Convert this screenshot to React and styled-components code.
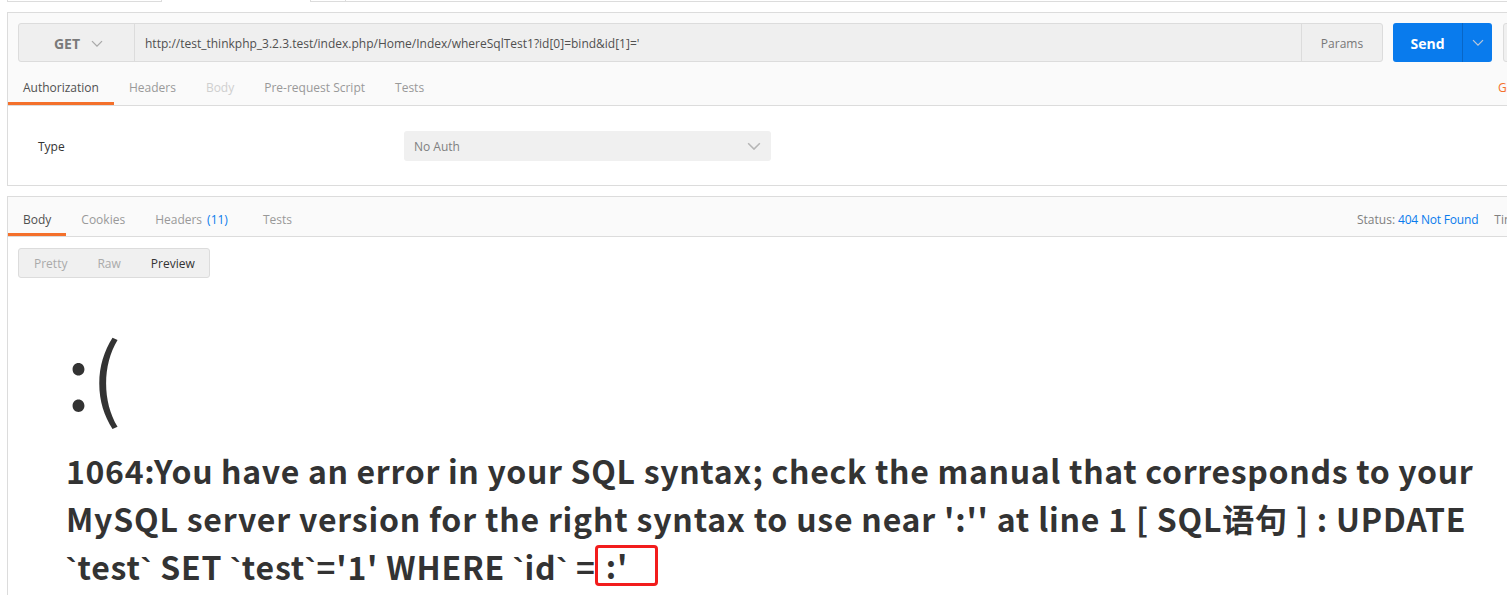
import React from "react";
import styled, { createGlobalStyle } from "styled-components";

const GlobalStyle = createGlobalStyle`
  html, body { margin: 0; padding: 0; background: #fff; overflow: hidden; }
  body { font-family: "Open Sans", "Noto Sans", sans-serif; }
  * { box-sizing: border-box; }
`;

const Root = styled.div`
  width: 1507px;
  height: 595px;
  overflow: hidden;
`;

const TopStrip = styled.div`
  display: flex;
  height: 2px;
`;

const StubTab = styled.div`
  margin-left: ${(p) => p.$ml}px;
  width: ${(p) => p.$w}px;
  height: 2px;
  border: 1px solid #dcdcdc;
  border-top: none;
`;

const StubRest = styled.div`
  flex: 1;
  height: 2px;
  border-bottom: 1px solid #dcdcdc;
`;

const Panel = styled.section`
  margin: 10px 0 0 7px;
  width: 1700px;
  border: 1px solid #dcdcdc;
  background: #fff;
`;

const RequestTop = styled.div`
  background: #fafafa;
  border-bottom: 1px solid #dcdcdc;
`;

const UrlRow = styled.div`
  display: flex;
  padding: 10px 10px 0;
`;

const UrlBar = styled.div`
  display: flex;
  width: 1365px;
  height: 39px;
  border: 1px solid #dcdcdc;
  border-radius: 3px;
  background: #efefef;
`;

const Method = styled.div`
  width: 116px;
  flex: none;
  display: flex;
  align-items: center;
  justify-content: center;
  gap: 11px;
  padding: 2px 0 0 4px;
  border-right: 1px solid #dcdcdc;
  font-size: 14px;
  font-weight: 700;
  color: #7a7a7a;
`;

const UrlText = styled.div`
  flex: 1;
  display: flex;
  align-items: center;
  padding: 2px 0 0 10px;
  font-size: 12px;
  color: #505050;
  white-space: nowrap;
`;

const Params = styled.div`
  width: 81px;
  flex: none;
  display: flex;
  align-items: center;
  justify-content: center;
  padding-top: 2px;
  border-left: 1px solid #dcdcdc;
  font-size: 12px;
  color: #777;
`;

const SendGroup = styled.div`
  display: flex;
  margin-left: 10px;
  width: 99px;
  height: 39px;
  border-radius: 3px;
  background: #097bed;
  overflow: hidden;
`;

const SendMain = styled.div`
  width: 69px;
  display: flex;
  align-items: center;
  justify-content: center;
  padding-top: 2px;
  color: #fff;
  font-size: 14px;
  font-weight: 700;
`;

const SendArrow = styled.div`
  flex: 1;
  display: flex;
  align-items: center;
  justify-content: center;
  border-left: 1px solid #0866c6;
`;

const SaveStub = styled.div`
  margin-left: 11px;
  width: 100px;
  height: 39px;
  border: 1px solid #dcdcdc;
  border-radius: 3px;
  background: #f0f0f0;
`;

const TabRow = styled.div`
  display: grid;
  grid-template-columns: ${(p) => p.$first}px auto;
  height: ${(p) => p.$h}px;
`;

const Tabs = styled.div`
  display: flex;
`;

const Tab = styled.div`
  display: flex;
  align-items: center;
  padding: ${(p) => p.$pt}px 15px 0;
  font-size: 12px;
  color: ${(p) => p.$color};
  border-bottom: 3px solid ${(p) => (p.$active ? "#f4702b" : "transparent")};
  white-space: nowrap;
`;

const Count = styled.span`
  color: #097bed;
  margin: 0 5px 0 5px;
`;

const RightInfo = styled.div`
  display: flex;
  align-items: center;
  padding-top: ${(p) => p.$pt}px;
  gap: 16px;
  font-size: 12px;
  white-space: nowrap;
`;

const Muted = styled.span`
  color: ${(p) => p.$color || "#808080"};
`;

const Blue = styled.span`
  color: #097bed;
  margin-left: 3px;
  letter-spacing: -0.2px;
`;

const AuthSection = styled.div`
  display: grid;
  grid-template-columns: 366px 367px;
  align-items: center;
  padding: 25px 0 24px 30px;
`;

const Label = styled.div`
  font-size: 12px;
  color: #333;
`;

const Select = styled.div`
  display: flex;
  align-items: center;
  justify-content: space-between;
  height: 30px;
  padding: 0 10px;
  border-radius: 3px;
  background: #f0f0f0;
  font-size: 12px;
  color: #808080;
`;

const ResponsePanel = styled.section`
  margin: 10px 0 0 7px;
  width: 1700px;
  height: 420px;
  border-top: 1px solid #dcdcdc;
  border-left: 1px solid #dcdcdc;
`;

const RespHeader = styled.div`
  background: #fafafa;
  border-bottom: 1px solid #dcdcdc;
`;

const RespBody = styled.div`
  padding: 11px 10px 0;
`;

const FormatGroup = styled.div`
  display: inline-flex;
  height: 30px;
  width: 192px;
  border: 1px solid #dcdcdc;
  border-radius: 3px;
  background: #f0f0f0;
`;

const FormatBtn = styled.div`
  display: flex;
  align-items: center;
  padding: 1px 15px 0;
  font-size: 12px;
  color: ${(p) => (p.$active ? "#333" : "#aaa")};
`;

const Preview = styled.div`
  margin-top: 12px;
  padding: 24px 48px;
  font-family: "Microsoft YaHei", "Noto Sans CJK SC", sans-serif;
  color: #333;
`;

const Face = styled.p`
  margin: 0 0 16px;
  font-size: 90px;
  line-height: 116px;
  font-weight: 400;
`;

const Message = styled.h1`
  margin: 0;
  font-size: 32px;
  line-height: 48px;
  font-weight: 700;
  white-space: nowrap;
`;

const Line = styled.span`
  display: block;
  letter-spacing: ${(p) => p.$ls || 0}px;
`;

const Tick = styled.span`
  font-family: "Liberation Sans", Arial, sans-serif;
`;

const Mark = styled.span`
  display: inline-block;
  width: 63px;
  margin-left: -1px;
  line-height: 35px;
  padding: 0 0 0 8px;
  border: 3px solid #f21c1c;
  border-radius: 4px;
  vertical-align: 1px;
`;

const Chevron = ({ color, size = 12 }) => (
  <svg width={size} height={size * 0.6} viewBox="0 0 12 7" fill="none">
    <polyline points="1,1 6,6 11,1" stroke={color} strokeWidth="1.3" />
  </svg>
);

const T = () => <Tick>`</Tick>;

export default function App() {
  return (
    <Root>
      <GlobalStyle />
      <TopStrip>
        <StubTab $ml={7} $w={155} />
        <StubTab $ml={148} $w={36} />
        <StubRest />
      </TopStrip>

      <Panel>
        <RequestTop>
          <UrlRow>
            <UrlBar>
              <Method>
                GET <Chevron color="#a8a8a8" />
              </Method>
              <UrlText>
                http://test_thinkphp_3.2.3.test/index.php/Home/Index/whereSqlTest1?id[0]=bind&amp;id[1]='
              </UrlText>
              <Params>Params</Params>
            </UrlBar>
            <SendGroup>
              <SendMain>Send</SendMain>
              <SendArrow>
                <Chevron color="#b9c7d8" />
              </SendArrow>
            </SendGroup>
            <SaveStub />
          </UrlRow>
          <TabRow $first={1490} $h={43}>
            <Tabs>
              <Tab $active $pt={10} $color="#505050">Authorization</Tab>
              <Tab $pt={10} $color="#999">Headers</Tab>
              <Tab $pt={10} $color="#cfcfcf">Body</Tab>
              <Tab $pt={10} $color="#999">Pre-request Script</Tab>
              <Tab $pt={10} $color="#999">Tests</Tab>
            </Tabs>
            <RightInfo $pt={7}>
              <Muted $color="#f4702b">Generate Code</Muted>
            </RightInfo>
          </TabRow>
        </RequestTop>
        <AuthSection>
          <Label>Type</Label>
          <Select>
            No Auth <Chevron color="#b5b5b5" size={14} />
          </Select>
        </AuthSection>
      </Panel>

      <ResponsePanel>
        <RespHeader>
          <TabRow $first={1349} $h={39}>
            <Tabs>
              <Tab $active $pt={8} $color="#505050">Body</Tab>
              <Tab $pt={8} $color="#999">Cookies</Tab>
              <Tab $pt={8} $color="#999">
                Headers<Count>(11)</Count>
              </Tab>
              <Tab $pt={8} $color="#999">Tests</Tab>
            </Tabs>
            <RightInfo $pt={5}>
              <span>
                <Muted>Status:</Muted>
                <Blue>404 Not Found</Blue>
              </span>
              <Muted>Time:</Muted>
            </RightInfo>
          </TabRow>
        </RespHeader>
        <RespBody>
          <FormatGroup>
            <FormatBtn>Pretty</FormatBtn>
            <FormatBtn>Raw</FormatBtn>
            <FormatBtn $active>Preview</FormatBtn>
          </FormatGroup>
          <Preview>
            <Face>:(</Face>
            <Message>
              <Line $ls={0.67}>
                1064:You have an error in your SQL syntax; check the manual that corresponds to your
              </Line>
              <Line $ls={0.78}>
                MySQL server version for the right syntax to use near ':'' at line 1 [ SQL语句 ] : UPDATE
              </Line>
              <Line $ls={0.8}>
                <T />test<T /> SET <T />test<T />='1' WHERE <T />id<T /> =<Mark>:'</Mark>
              </Line>
            </Message>
          </Preview>
        </RespBody>
      </ResponsePanel>
    </Root>
  );
}
